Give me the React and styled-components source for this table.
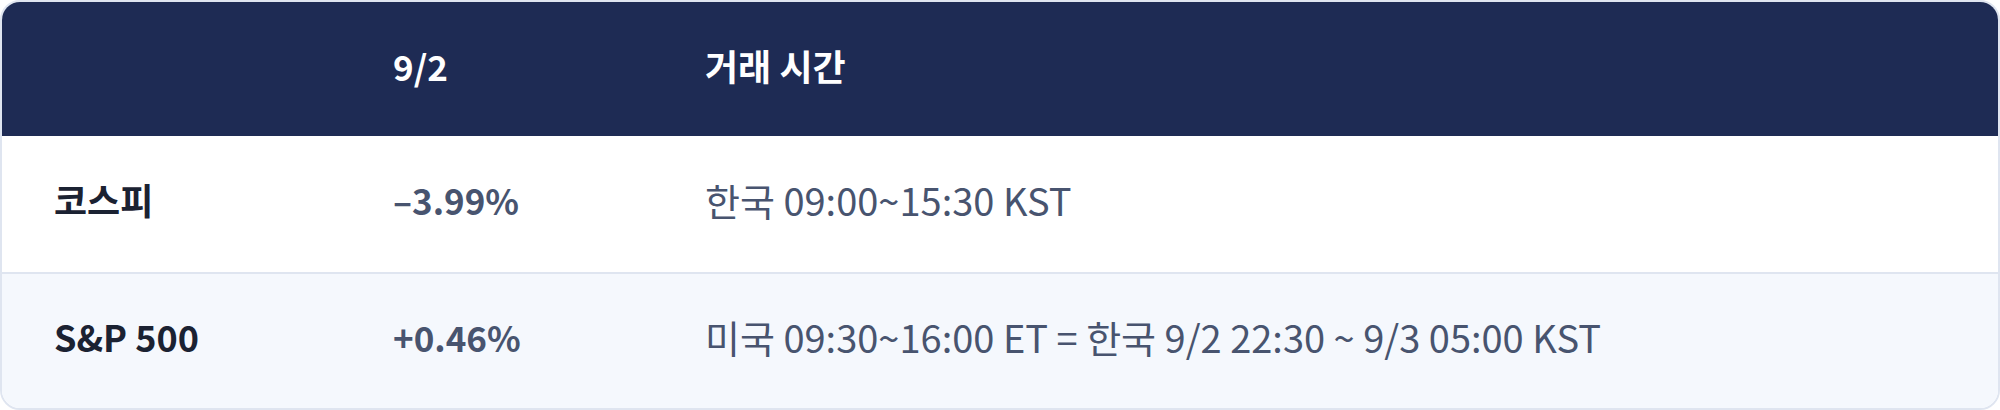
import React from 'react';
import styled, { createGlobalStyle } from 'styled-components';

const GlobalStyle = createGlobalStyle`
  html, body {
    margin: 0;
    padding: 0;
    background: #ffffff;
  }
  body {
    font-family: "Noto Sans CJK KR", "Noto Sans", sans-serif;
  }
`;

const Card = styled.div`
  width: 2000px;
  box-sizing: border-box;
  border: 2px solid #dfe5f0;
  border-radius: 20px;
  overflow: hidden;
`;

const Row = styled.div`
  display: grid;
  grid-template-columns: 339px 312px 1fr;
  align-items: center;
  height: ${(props) => props.h}px;
  padding-bottom: ${(props) => props.lift || 0}px;
  background: ${(props) => props.bg};
  border-bottom: ${(props) => (props.line ? '2px solid #dfe5f0' : 'none')};
  box-sizing: border-box;
`;

const Cell = styled.div`
  padding-left: 52px;
  font-size: ${(props) => props.size || 38}px;
  font-weight: ${(props) => props.weight || 400};
  color: ${(props) => props.color || '#48546f'};
  line-height: 1.2;
  white-space: nowrap;
`;

const rows = [
  { name: '코스피', change: '–3.99%', time: '한국 09:00~15:30 KST', bg: '#ffffff' },
  {
    name: 'S&P 500',
    change: '+0.46%',
    time: '미국 09:30~16:00 ET = 한국 9/2 22:30 ~ 9/3 05:00 KST',
    bg: '#f5f8fd',
  },
];

const App = () => {
  return (
    <>
      <GlobalStyle />
      <Card>
        <Row h={134} bg="#1e2b54" lift={6}>
          <Cell />
          <Cell size={35} weight={700} color="#ffffff">9/2</Cell>
          <Cell size={36} weight={700} color="#ffffff">거래 시간</Cell>
        </Row>
        {rows.map((row, i) => (
          <Row key={row.name} h={i === 0 ? 138 : 134} bg={row.bg} line={i === 0} lift={8}>
            <Cell size={36} weight={700} color="#1b2232">{row.name}</Cell>
            <Cell size={35} weight={700} color="#48546f">{row.change}</Cell>
            <Cell>{row.time}</Cell>
          </Row>
        ))}
      </Card>
    </>
  );
};

export default App;
